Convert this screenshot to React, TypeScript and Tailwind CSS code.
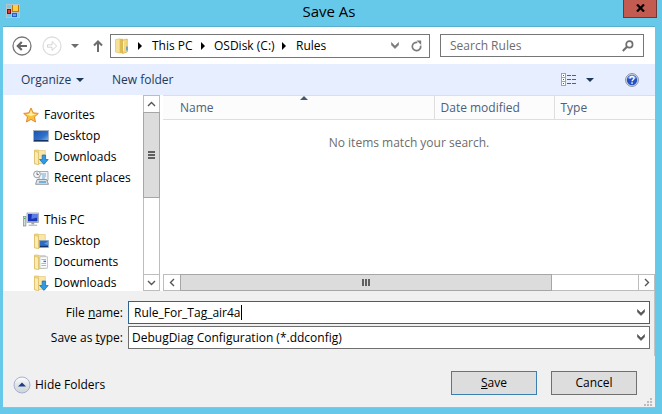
import React, { useState } from 'react'

type Item = {
  label: string
  icon: React.ReactNode
}

/* === ICONS === */

function AppIcon() {
  return (
    <svg width="14" height="14" viewBox="0 0 14 14" shapeRendering="crispEdges">
      <rect width="14" height="14" fill="#b9c3c9" />
      <rect x="1" y="1" width="4" height="3" fill="#74cbe8" />
      <rect x="1" y="10" width="4" height="3" fill="#74cbe8" />
      <rect x="1" y="5" width="4" height="5" fill="#7d0f0f" />
      <rect x="2" y="6" width="2" height="3" fill="#d8432f" />
      <rect x="6" y="1" width="7" height="7" fill="#b87a06" />
      <rect x="7" y="1" width="5" height="6" fill="#fdcf45" />
      <rect x="6" y="9" width="5" height="4" fill="#2b5bc4" />
      <rect x="7" y="10" width="3" height="2" fill="#6f9cf0" />
      <rect x="12" y="9" width="1" height="4" fill="#74cbe8" />
    </svg>
  )
}

function RoundArrow({ flip, color, ring }: { flip?: boolean; color: string; ring: string }) {
  return (
    <svg width="20" height="20" viewBox="0 0 20 20" fill="none">
      <circle cx="10" cy="10" r="9" stroke={ring} strokeWidth="1.3" />
      {flip ? (
        <path d="M5.5 8.8h4.6V5.6l4.6 4.4-4.6 4.4v-3.2H5.5z" stroke={color} />
      ) : (
        <path d="M15 10H6.2M9.8 6L5.8 10l4 4" stroke={color} strokeWidth="2.2" />
      )}
    </svg>
  )
}

function UpArrow() {
  return (
    <svg width="12" height="14" viewBox="0 0 12 14" fill="none" stroke="#6d6d6d" strokeWidth="2">
      <path d="M6 13V2.5M2 6.5l4-4 4 4" />
    </svg>
  )
}

function DownTriangle({ color }: { color: string }) {
  return (
    <svg width="8" height="4" viewBox="0 0 8 4">
      <path d="M0 0h8L4 4z" fill={color} />
    </svg>
  )
}

function RightTriangle() {
  return (
    <svg width="4" height="8" viewBox="0 0 4 8">
      <path d="M0 0l4 4-4 4z" fill="#000" />
    </svg>
  )
}

function ThickChevron({ color }: { color: string }) {
  return (
    <svg width="8" height="7" viewBox="0 0 8 7">
      <path d="M0.5 0.5L4 4l3.5-3.5V3L4 6.6 0.5 3z" fill={color} stroke={color} strokeWidth="0.6" />
    </svg>
  )
}

function ThinChevron({ d }: { d: string }) {
  return (
    <svg width="9" height="9" viewBox="0 0 9 9" fill="none" stroke="#555" strokeWidth="1.4">
      <path d={d} />
    </svg>
  )
}

function RefreshIcon() {
  return (
    <svg width="11" height="12" viewBox="0 0 11 12" fill="none">
      <path d="M6.4 2.4A4.2 4.2 0 1 0 9.6 5.6" stroke="#7b7b7b" strokeWidth="1.7" />
      <path d="M5.6 0.4h4.6V5z" fill="#7b7b7b" />
    </svg>
  )
}

function SearchIcon() {
  return (
    <svg width="12" height="12" viewBox="0 0 12 12" fill="none" stroke="#6f6f6f">
      <circle cx="7.4" cy="4.4" r="3.2" strokeWidth="1.7" />
      <path d="M5 6.8L0.8 11" strokeWidth="2" />
    </svg>
  )
}

function FolderShape() {
  return (
    <>
      <path d="M1.5 1h4l1 1.5V15h-5z" fill="#f3d985" stroke="#d9b95c" strokeWidth="0.6" />
      <path d="M5.5 1.5h6.8V14.5H5.5z" fill="#f9e7a9" stroke="#dfc26c" strokeWidth="0.6" />
      <path d="M1.5 2l4 1.6V16l-4-1.6z" fill="#fbeab2" stroke="#d5b558" strokeWidth="0.6" />
    </>
  )
}

function AddressFolderIcon() {
  return (
    <svg width="14" height="16" viewBox="0 0 14 16">
      <path d="M0.5 1.5L5 0.8V15l-4.5-1z" fill="#f6e196" stroke="#d9bd62" strokeWidth="0.6" />
      <path d="M5 0.8h3v14.4H5z" fill="#e0bd51" />
      <path d="M7.5 2l4.8-1v13l-4.8 1.6z" fill="#f3d77b" stroke="#cda944" strokeWidth="0.6" />
      <path d="M8.5 3v10" stroke="#fdf1bf" />
      <path d="M12 8.5v4" stroke="#4a9be0" strokeWidth="1.6" />
    </svg>
  )
}

function StarIcon() {
  return (
    <svg width="16" height="16" viewBox="0 0 16 16">
      <path d="M8 1l2.2 4.8 5.1.6-3.8 3.5 1 5.1L8 12.4 3.4 15l1.1-5.1L.7 6.4l5.1-.6z" fill="#f9c23c" stroke="#e0802a" strokeWidth="0.9" />
      <path d="M8 3l1.5 3.7 3.6.5L8 9 3.2 7.2l3.4-.5z" fill="#fff0a0" />
    </svg>
  )
}

function DesktopIcon() {
  return (
    <svg width="16" height="16" viewBox="0 0 16 16">
      <defs>
        <linearGradient id="screen" x1="0" y1="0" x2="1" y2="1">
          <stop offset="0" stopColor="#1c50a8" />
          <stop offset="0.6" stopColor="#2f72cc" />
          <stop offset="1" stopColor="#8fc0ee" />
        </linearGradient>
      </defs>
      <rect x="0.5" y="2.5" width="15" height="11" fill="url(#screen)" stroke="#a5b3c0" />
      <rect x="1" y="12" width="14" height="1.4" fill="#14315f" />
    </svg>
  )
}

function DownloadsIcon() {
  return (
    <svg width="16" height="16" viewBox="0 0 16 16">
      <FolderShape />
      <path d="M9.2 6h3.4v4.5h2.6L10.9 15.4 6.6 10.5h2.6z" fill="#2f9be6" stroke="#1769b0" strokeWidth="0.7" />
    </svg>
  )
}

function RecentIcon() {
  return (
    <svg width="16" height="16" viewBox="0 0 16 16">
      <path d="M6 1.5h9v9H6z" fill="#eef4f9" stroke="#8e9aa4" strokeWidth="0.8" />
      <path d="M8 4h5M9 6h4M9 8h3" stroke="#7aa7cf" />
      <path d="M4 9.5h9.5l2 4.8H2.6z" fill="#dce3e8" stroke="#7b858d" strokeWidth="0.8" />
      <path d="M6 12h7" stroke="#2a8fd0" strokeWidth="1.2" />
      <circle cx="4" cy="4.4" r="3.4" fill="#f4f6f8" stroke="#8c959c" strokeWidth="0.9" />
      <path d="M4 2.4v2.2h1.8" stroke="#555" strokeWidth="0.8" fill="none" />
    </svg>
  )
}

function ComputerIcon() {
  return (
    <svg width="16" height="16" viewBox="0 0 16 16">
      <rect x="0.5" y="4.5" width="2.4" height="9.5" fill="#d5dadd" stroke="#808a90" strokeWidth="0.7" />
      <path d="M1 6.5h1.4" stroke="#3fae49" />
      <rect x="4" y="1" width="11.5" height="9.5" fill="#d4dae0" stroke="#8b97a2" strokeWidth="0.7" />
      <rect x="5" y="2" width="9.5" height="7.4" fill="#1a35b8" />
      <path d="M9 2h5.5v3.6L8.4 7z" fill="#5a7ee6" />
      <path d="M8.4 10.5h2.8v2H8.4z" fill="#9aa5ae" />
      <path d="M5.5 12.6h8.6v1.4H5.5z" fill="#b9c2c9" />
    </svg>
  )
}

function DesktopFolderIcon() {
  return (
    <svg width="16" height="16" viewBox="0 0 16 16">
      <FolderShape />
      <rect x="6.5" y="7.5" width="9" height="7" fill="#2e6cc4" stroke="#8aa5c0" strokeWidth="0.7" />
      <path d="M7 13.4h8" stroke="#12305e" />
      <path d="M11 11l4-3v4z" fill="#5d9ae0" />
    </svg>
  )
}

function DocumentsIcon() {
  return (
    <svg width="16" height="16" viewBox="0 0 16 16">
      <FolderShape />
      <rect x="6.9" y="2.8" width="7.4" height="11.4" fill="#fbfcfe" stroke="#9fb0c0" strokeWidth="0.7" />
      <path d="M8.4 5.5h4.6M8.4 9.5h4.6M8.4 11.5h4.6" stroke="#8fa9c6" strokeWidth="0.8" />
      <path d="M10.5 7.4H13" stroke="#2b7bd0" strokeWidth="1.4" />
    </svg>
  )
}

function ViewIcon() {
  return (
    <svg width="16" height="13" viewBox="0 0 16 13" shapeRendering="crispEdges">
      <path d="M0.5 0.5h4v12h-4zM0 4.5h5M0 8.5h5" fill="#fff" stroke="#9aa4b0" />
      <path d="M2 2h1v1H2zM2 10h1v1H2z" fill="#1f6f8f" />
      <path d="M2 6h1v1H2z" fill="#e02020" />
      <path d="M6 2.5h4M11 2.5h4M6 6.5h4M11 6.5h4M6 10.5h4M11 10.5h4" stroke="#4b6382" />
    </svg>
  )
}

function HelpIcon() {
  return (
    <svg width="14" height="14" viewBox="0 0 14 14">
      <circle cx="7" cy="7" r="6.4" fill="#dfe5ee" stroke="#84899a" strokeWidth="1" />
      <circle cx="7" cy="7" r="5.2" fill="#2451c4" />
      <path d="M2.6 5.4a4.6 4.6 0 0 1 8.8 0z" fill="#6f9af0" />
      <path d="M5 5.5c0-2.6 4.1-2.6 4.1-.2 0 1.5-2 1.5-2 3" stroke="#fff" strokeWidth="1.4" fill="none" />
      <rect x="6.3" y="9.3" width="1.5" height="1.5" fill="#fff" />
    </svg>
  )
}

function HideIcon() {
  return (
    <svg width="18" height="18" viewBox="0 0 18 18">
      <defs>
        <linearGradient id="knob" x1="0" y1="0" x2="0" y2="1">
          <stop offset="0" stopColor="#ffffff" />
          <stop offset="0.5" stopColor="#dfe4e6" />
          <stop offset="1" stopColor="#cdd5d6" />
        </linearGradient>
      </defs>
      <circle cx="9" cy="9" r="8" fill="url(#knob)" stroke="#a6b0d6" />
      <path d="M5 10.5L9 6.5l4 4z" fill="#1d3a8a" />
    </svg>
  )
}

function ResizeGrip() {
  return (
    <svg width="8" height="8" viewBox="0 0 8 8" fill="#bcbcbc" shapeRendering="crispEdges">
      <path d="M6 0h2v2H6zM3 3h2v2H3zM6 3h2v2H6zM0 6h2v2H0zM3 6h2v2H3zM6 6h2v2H6z" />
    </svg>
  )
}

/* === DATA === */

const favorites: Item[] = [
  { label: 'Desktop', icon: <DesktopIcon /> },
  { label: 'Downloads', icon: <DownloadsIcon /> },
  { label: 'Recent places', icon: <RecentIcon /> },
]

const thisPc: Item[] = [
  { label: 'Desktop', icon: <DesktopFolderIcon /> },
  { label: 'Documents', icon: <DocumentsIcon /> },
  { label: 'Downloads', icon: <DownloadsIcon /> },
]

function TreeGroup({ title, icon, items }: { title: string; icon: React.ReactNode; items: Item[] }) {
  return (
    <div>
      <a href="#" className="flex h-[21px] items-center gap-[5px] pl-5">
        {icon}
        {title}
      </a>
      <ul>
        {items.map(item => (
          <li key={item.label}>
            <a href="#" className="flex h-[21px] items-center gap-[5px] pl-[30px] whitespace-nowrap">
              {item.icon}
              {item.label}
            </a>
          </li>
        ))}
      </ul>
    </div>
  )
}

export default function App() {
  const [fileName, setFileName] = useState('Rule_For_Tag_air4a')

  return (
    <div className="flex h-screen flex-col bg-[#67c9ea] pr-[7px] pb-[6px] pl-[3px] font-['Open_Sans','Noto_Sans',sans-serif] text-[12px] leading-4 text-black">
      {/* Title bar */}
      <header className="grid h-[26px] shrink-0 grid-cols-[1fr_auto_1fr] items-start">
        <div className="pt-1 pl-[3px]">
          <AppIcon />
        </div>
        <h1 className="pt-px text-[15px] leading-5">Save As</h1>
        <button aria-label="Close" className="-mr-[2px] flex h-[18px] w-[34px] items-center justify-center justify-self-end border border-t-0 border-[#6e3733] bg-[#c45b51] pb-[2px]">
          <svg width="9" height="8" viewBox="0 0 9 8" stroke="#000" strokeWidth="2.2">
            <path d="M1 0.5l7 7M8 0.5l-7 7" />
          </svg>
        </button>
      </header>

      <main className="flex min-h-0 flex-1 flex-col border-y border-t-[#58aecb] border-b-[#8fc2d5] bg-white">
        {/* Address bar */}
        <div className="flex h-[37px] shrink-0 items-center pr-[11px] pl-[9px]">
          <button aria-label="Back"><RoundArrow color="#666" ring="#777" /></button>
          <button aria-label="Forward" className="ml-[10px]"><RoundArrow flip color="#d4d4d4" ring="#dedede" /></button>
          <button aria-label="Recent locations" className="ml-[9px]"><DownTriangle color="#6d6d6d" /></button>
          <button aria-label="Up" className="ml-[13px]"><UpArrow /></button>
          <nav className="ml-[6px] flex h-6 flex-1 items-center border border-[#767676] pr-[7px] pl-1">
            <AddressFolderIcon />
            <span className="ml-[9px]"><RightTriangle /></span>
            <button className="ml-[10px] w-[49px] text-left whitespace-nowrap">This PC</button>
            <RightTriangle />
            <button className="ml-[9px] w-[68px] text-left whitespace-nowrap">OSDisk (C:)</button>
            <RightTriangle />
            <button className="ml-[10px] flex-1 text-left">Rules</button>
            <button aria-label="Previous locations"><ThickChevron color="#7b7b7b" /></button>
            <button aria-label="Refresh" className="ml-3"><RefreshIcon /></button>
          </nav>
          <label className="ml-[10px] flex h-[23px] w-[204px] items-center border border-[#767676] pr-[9px] pl-[9px]">
            <input type="search" aria-label="Search Rules" placeholder="Search Rules" className="min-w-0 flex-1 outline-none placeholder:text-[#6d6d6d]" />
            <SearchIcon />
          </label>
        </div>

        {/* Toolbar */}
        <div className="flex h-[31px] shrink-0 items-center bg-[#e6eeff] pr-4 pl-[18px] text-[#1e395b]">
          <button className="flex w-[91px] items-center gap-[5px]">
            Organize
            <DownTriangle color="#1e395b" />
          </button>
          <button>New folder</button>
          <button aria-label="Change view" className="ml-auto"><ViewIcon /></button>
          <button aria-label="More options" className="ml-[9px]"><DownTriangle color="#1e395b" /></button>
          <button aria-label="Help" className="ml-[31px]"><HelpIcon /></button>
        </div>

        {/* Folder tree and file list */}
        <div className="flex min-h-0 flex-1">
          <nav className="flex w-[140px] shrink-0 flex-col gap-[21px] overflow-hidden pt-[9px]">
            <TreeGroup title="Favorites" icon={<StarIcon />} items={favorites} />
            <TreeGroup title="This PC" icon={<ComputerIcon />} items={thisPc} />
          </nav>
          <div className="flex w-[17px] shrink-0 flex-col border border-[#bdbdbd]">
            <button aria-label="Scroll up" className="flex h-4 items-center justify-center">
              <ThinChevron d="M1 6l3.5-3.5L8 6" />
            </button>
            <div className="-mx-px flex h-[86px] flex-col items-center justify-center gap-px border border-[#a6a6a6] bg-[#dcdcdc]">
              <span className="h-[2px] w-[7px] bg-[#606060]" />
              <span className="h-[2px] w-[7px] bg-[#606060]" />
              <span className="h-[2px] w-[7px] bg-[#606060]" />
            </div>
            <button aria-label="Scroll down" className="mt-auto flex h-4 items-center justify-center border-t border-[#bdbdbd]">
              <ThinChevron d="M1 3l3.5 3.5L8 3" />
            </button>
          </div>
          <section className="ml-[3px] flex min-w-0 flex-1 flex-col">
            <table className="w-full table-fixed border-collapse">
              <colgroup>
                <col className="w-[271px]" />
                <col className="w-[120px]" />
                <col />
              </colgroup>
              <thead className="bg-[#fcfcfc] text-left text-[#4c607a]">
                <tr className="h-6 border-y border-[#dedede]">
                  <th className="relative border-r border-[#dedede] pl-[17px] font-normal">
                    <span className="absolute top-0 right-0 left-3 flex justify-center">
                      <svg width="8" height="4" viewBox="0 0 8 4">
                        <path d="M0 4h8L4 0z" fill="#44597a" />
                      </svg>
                    </span>
                    Name
                  </th>
                  <th className="border-r border-[#dedede] pl-[6px] font-normal">Date modified</th>
                  <th className="pl-[6px] font-normal">Type</th>
                </tr>
              </thead>
              <tbody>
                <tr>
                  <td colSpan={3} className="pt-[15px] text-center text-[#6d6d6d]">No items match your search.</td>
                </tr>
              </tbody>
            </table>
            <div className="mt-auto flex h-[17px] border border-[#bdbdbd]">
              <button aria-label="Scroll left" className="flex w-4 items-center justify-center">
                <ThinChevron d="M6 1L2.5 4.5 6 8" />
              </button>
              <div className="-my-px flex w-[76%] items-center justify-center gap-px border border-[#a6a6a6] bg-[#dcdcdc]">
                <span className="h-[7px] w-[2px] bg-[#606060]" />
                <span className="h-[7px] w-[2px] bg-[#606060]" />
                <span className="h-[7px] w-[2px] bg-[#606060]" />
              </div>
              <div className="flex-1" />
              <button aria-label="Scroll right" className="flex w-4 items-center justify-center border-l border-[#bdbdbd]">
                <ThinChevron d="M3 1l3.5 3.5L3 8" />
              </button>
            </div>
          </section>
        </div>

        {/* File name, type and actions */}
        <footer className="shrink-0 bg-[#f0f0f0]">
          <div className="grid grid-cols-[120px_1fr] items-center gap-x-[5px] gap-y-[2px] border-r border-[#c4c4c4] pt-[10px] pr-1 pb-[7px]">
            <label htmlFor="file-name" className="text-right">
              File <u>n</u>ame:
            </label>
            <div className="flex h-[23px] items-center border border-[#2f6390] bg-white pr-1 pl-[5px]">
              <input
                id="file-name"
                value={fileName}
                onChange={e => setFileName(e.target.value)}
                className="field-sizing-content caret-transparent outline-none"
              />
              <span className="h-[15px] w-px bg-black" />
              <button aria-label="Previous names" className="ml-auto"><ThickChevron color="#555" /></button>
            </div>
            <label htmlFor="save-type" className="text-right">
              Save as <u>t</u>ype:
            </label>
            <div className="grid h-[23px] items-center border border-[#6f6f6f] bg-white pr-1 pl-[3px]">
              <select id="save-type" className="col-start-1 row-start-1 w-full appearance-none outline-none">
                <option>DebugDiag Configuration (*.ddconfig)</option>
              </select>
              <span className="pointer-events-none col-start-1 row-start-1 justify-self-end">
                <ThickChevron color="#555" />
              </span>
            </div>
          </div>
          <div className="flex items-center pt-[15px] pr-[18px] pl-[10px]">
            <button className="flex items-center gap-1 pt-[3px]">
              <HideIcon />
              Hide Folders
            </button>
            <button className="ml-auto h-6 w-[86px] border border-[#3c7fb1] bg-[#dddddd]">
              <u>S</u>ave
            </button>
            <button className="ml-[14px] h-6 w-[86px] border border-[#707070] bg-[#dddddd]">Cancel</button>
          </div>
          <div className="flex justify-end pt-[3px] pr-[3px] pb-px">
            <ResizeGrip />
          </div>
        </footer>
      </main>
    </div>
  )
}
